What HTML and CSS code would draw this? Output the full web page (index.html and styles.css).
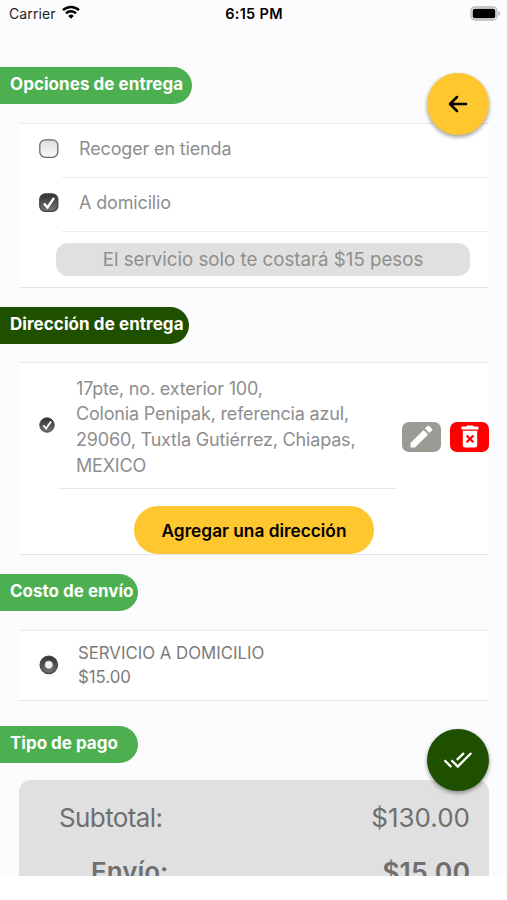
FILE: index.html
```html
<!DOCTYPE html>
<html lang="es">
<head>
    <meta charset="UTF-8">
    <meta name="viewport" content="width=device-width, initial-scale=1.0">
    <title>Entrega</title>
    <link rel="stylesheet" href="styles.css">
</head>
<body>
    <div class="screen">
        <header class="status-bar">
            <div class="carrier">
                <span>Carrier</span>
                <svg width="18" height="14" viewBox="0 0 18 14" fill="none" stroke="#000" stroke-width="2.5">
                    <path d="M1 5.2a11.5 11.5 0 0 1 16 0"/>
                    <path d="M4 8.3a7.2 7.2 0 0 1 10 0"/>
                    <path d="M9 13.8L6.2 10.9a4 4 0 0 1 5.6 0z" fill="#000" stroke="none"/>
                </svg>
            </div>
            <div class="time">6:15 PM</div>
            <svg class="battery" width="31" height="15" viewBox="0 0 31 15">
                <rect x="1" y="1" width="26" height="13" rx="4" fill="#fff" stroke="#b5b5b7" stroke-width="1.3"/>
                <rect x="2.7" y="2.8" width="22.6" height="9.4" rx="2" fill="#000"/>
                <path d="M28.4 5v5q1.7-.7 1.7-2.5T28.4 5z" fill="#b5b5b7"/>
            </svg>
        </header>

        <h2 class="section-title title-options">Opciones de entrega</h2>
        <section class="card options">
            <label class="option">
                <svg width="20" height="20" viewBox="0 0 20 20">
                    <defs>
                        <linearGradient id="light" x1="0" y1="0" x2="0" y2="1">
                            <stop offset="0" stop-color="#dcdcdc"/>
                            <stop offset="1" stop-color="#fafafa"/>
                        </linearGradient>
                        <linearGradient id="dark" x1="0" y1="0" x2="0" y2="1">
                            <stop offset="0" stop-color="#303030"/>
                            <stop offset="1" stop-color="#777"/>
                        </linearGradient>
                    </defs>
                    <rect x=".8" y=".8" width="18" height="17.6" rx="5.5" fill="url(#light)" stroke="#6a6a6a" stroke-width="1.3"/>
                </svg>
                <span>Recoger en tienda</span>
            </label>
            <label class="option">
                <svg width="20" height="20" viewBox="0 0 20 20">
                    <rect x=".8" y=".8" width="18" height="17.6" rx="5.5" fill="url(#dark)" stroke="#424242" stroke-width="1.3"/>
                    <path d="M5 10.5l3.5 4L15 4.8" fill="none" stroke="#fff" stroke-width="2.3"/>
                </svg>
                <span>A domicilio</span>
            </label>
            <p class="notice"><span>El servicio solo te costará $15 pesos</span></p>
        </section>

        <h2 class="section-title title-address">Dirección de entrega</h2>
        <section class="card addresses">
            <div class="address-row">
                <svg class="address-check" width="16" height="16" viewBox="0 0 16 16">
                    <circle cx="8" cy="8" r="7.2" fill="url(#dark)" stroke="#424242"/>
                    <path d="M4.3 8.4l2.8 3.1 4.9-7" fill="none" stroke="#fff" stroke-width="1.8"/>
                </svg>
                <p class="address">17pte, no. exterior 100,<br>Colonia Penipak, referencia azul,<br>29060, Tuxtla Gutiérrez, Chiapas,<br>MEXICO</p>
                <button class="btn-icon edit" aria-label="Editar">
                    <svg width="25" height="25" viewBox="0 0 24 24" fill="#fff">
                        <path d="M1.5 18.2v4.3h4.3L18.3 10 14 5.7zM22 6.3a1.3 1.3 0 0 0 0-1.8L19.5 2a1.3 1.3 0 0 0-1.8 0L15.3 4.4l4.3 4.3z"/>
                    </svg>
                </button>
                <button class="btn-icon delete" aria-label="Eliminar">
                    <svg width="18" height="24" viewBox="0 0 18 24">
                        <path d="M.5 1.5h4.7L6.3.5h5.4l1.1 1h4.7v3H.5zM1.8 5.8h14.4v14.4a2.3 2.3 0 0 1-2.3 2.3H4.1a2.3 2.3 0 0 1-2.3-2.3z" fill="#fff"/>
                        <path d="M5.6 10.5l6.8 6.8m0-6.8l-6.8 6.8" stroke="#f00" stroke-width="2.2"/>
                    </svg>
                </button>
            </div>
            <button class="add-address"><span>Agregar una dirección</span></button>
        </section>

        <h2 class="section-title title-cost">Costo de envío</h2>
        <section class="card shipping">
            <svg width="20" height="20" viewBox="0 0 20 20">
                <circle cx="9.8" cy="9.8" r="8.7" fill="url(#dark)" stroke="#484848" stroke-width="1.3"/>
                <circle cx="9.8" cy="9.8" r="3.8" fill="#f2f2f2" stroke="#ccc" stroke-width=".6"/>
            </svg>
            <p>SERVICIO A DOMICILIO<br>$15.00</p>
        </section>

        <h2 class="section-title title-payment">Tipo de pago</h2>
        <section class="summary">
            <div class="summary-row">
                <span class="subtotal">Subtotal:</span>
                <span>$130.00</span>
            </div>
            <div class="summary-row shipping-row">
                <span>Envío:</span>
                <span class="shipping-price">$15.00</span>
            </div>
        </section>

        <button class="fab back" aria-label="Regresar">
            <svg width="20" height="18" viewBox="0 0 20 18" fill="none" stroke="#000" stroke-width="2.5" stroke-linecap="round" stroke-linejoin="round">
                <path d="M9 2L2 9l7 7M2.5 9H18"/>
            </svg>
        </button>
        <button class="fab confirm" aria-label="Confirmar">
            <svg width="30" height="18" viewBox="0 0 30 18" fill="none" stroke="#fff" stroke-width="2.3">
                <path d="M1.5 9.2L8.3 16M8.5 9.2l6.3 6.3L28.3 2M13.8 8.8L21 2"/>
            </svg>
        </button>
    </div>
</body>
</html>
```

FILE: styles.css
```css
* {
    box-sizing: border-box;
}
body {
    margin: 0;
    background-color: #fff;
    font-family: Inter, "Liberation Sans", sans-serif;
}
p, h2 {
    margin: 0;
}
svg {
    flex-shrink: 0;
}
button {
    border: none;
    padding: 0;
    cursor: pointer;
    font-family: inherit;
}
.screen {
    position: relative;
    height: 876px;
    overflow: hidden;
    background-color: #fcfcff;
}
.status-bar {
    display: grid;
    grid-template-columns: 1fr auto 1fr;
    align-items: center;
    height: 27px;
    padding: 0 6px 0 9px;
    font-size: 14px;
}
.carrier {
    display: flex;
    align-items: center;
    gap: 6px;
    color: #222;
    letter-spacing: 0.1px;
}
.carrier svg {
    margin-top: -3px;
}
.time {
    padding-right: 2px;
    font-size: 14.5px;
    font-weight: 600;
    letter-spacing: 0.3px;
}
.battery {
    justify-self: end;
}
.section-title {
    display: flex;
    align-items: center;
    width: 138px;
    height: 37px;
    padding: 0 0 3px 10px;
    border-radius: 0 19px 19px 0;
    background-color: #4caf50;
    color: #fff;
    font-size: 17px;
    font-weight: 700;
    white-space: nowrap;
}
.title-options {
    width: 192px;
    margin-top: 40px;
    letter-spacing: 0.05px;
}
.title-address {
    width: 189px;
    margin-top: 19px;
    background-color: #1f5000;
    letter-spacing: 0.07px;
}
.title-cost {
    margin-top: 19px;
}
.title-payment {
    margin-top: 25px;
}
.card {
    margin: 19px 18px 0 20px;
    border-top: 1px solid #e9e9ec;
    border-bottom: 1px solid #e5e5e8;
    background-color: #fff;
    color: #8e8e8e;
    font-size: 18px;
}
.options {
    height: 165px;
    margin-top: 18.5px;
}
.option {
    display: flex;
    align-items: center;
    gap: 20px;
    height: 54px;
    padding: 0 0 3px 19px;
    background: linear-gradient(#ececee, #ececee) 42px 100% / 100% 1px no-repeat;
    letter-spacing: -0.15px;
}
.option span {
    padding-bottom: 1px;
}
.notice {
    display: flex;
    align-items: center;
    justify-content: center;
    height: 33px;
    margin: 11.5px 19px 0 36px;
    border-radius: 12px;
    background-color: #e0e0e0;
    font-size: 18.7px;
}
.addresses {
    height: 193px;
    margin-top: 18.5px;
}
.address-row {
    display: flex;
    align-items: center;
    height: 126px;
    padding-left: 19px;
    background: linear-gradient(#e8e8ea, #e8e8ea) 38px 100% / 338px 1px no-repeat;
}
.address-check {
    margin: 0 21px 3px 0;
}
.address {
    width: 326px;
    padding-top: 2px;
    line-height: 25.6px;
    letter-spacing: -0.18px;
    white-space: nowrap;
}
.btn-icon {
    display: flex;
    align-items: center;
    justify-content: center;
    flex-shrink: 0;
    width: 39px;
    height: 30px;
    margin-top: 21px;
    border-radius: 7px;
}
.edit {
    margin-right: 9px;
    background-color: #9b9b96;
}
.delete {
    background-color: #f00;
}
.add-address {
    display: block;
    width: 240px;
    height: 48px;
    margin: 17px auto 0 114px;
    border-radius: 25px;
    background-color: #ffc72f;
    color: #000;
    font-size: 17.3px;
    font-weight: 600;
}
.shipping {
    display: flex;
    align-items: center;
    gap: 19px;
    height: 70.5px;
    padding-left: 19px;
    color: #7b7b7b;
    font-size: 16.8px;
    line-height: 23.5px;
}
.shipping p {
    padding-top: 1px;
}
.summary {
    height: 160px;
    margin: 17px 18px 0 19px;
    padding: 11px 19px 0 40px;
    border-radius: 12px;
    background-color: #e0e0e0;
    color: #6f6f70;
    font-size: 26px;
}
.summary-row {
    display: flex;
    align-items: center;
    justify-content: space-between;
    height: 54px;
}
.subtotal {
    letter-spacing: -0.6px;
}
.shipping-row {
    padding-left: 32px;
    font-weight: 600;
}
.shipping-price {
    font-size: 26.7px;
}
.fab {
    position: absolute;
    right: 18px;
    display: flex;
    align-items: center;
    justify-content: center;
    width: 62px;
    height: 62px;
    border-radius: 50%;
    box-shadow: 0 2px 4px rgba(0, 0, 0, 0.4);
}
.back {
    top: 73px;
    background-color: #ffc72f;
}
.confirm {
    top: 729px;
    background-color: #1f5000;
}
```
